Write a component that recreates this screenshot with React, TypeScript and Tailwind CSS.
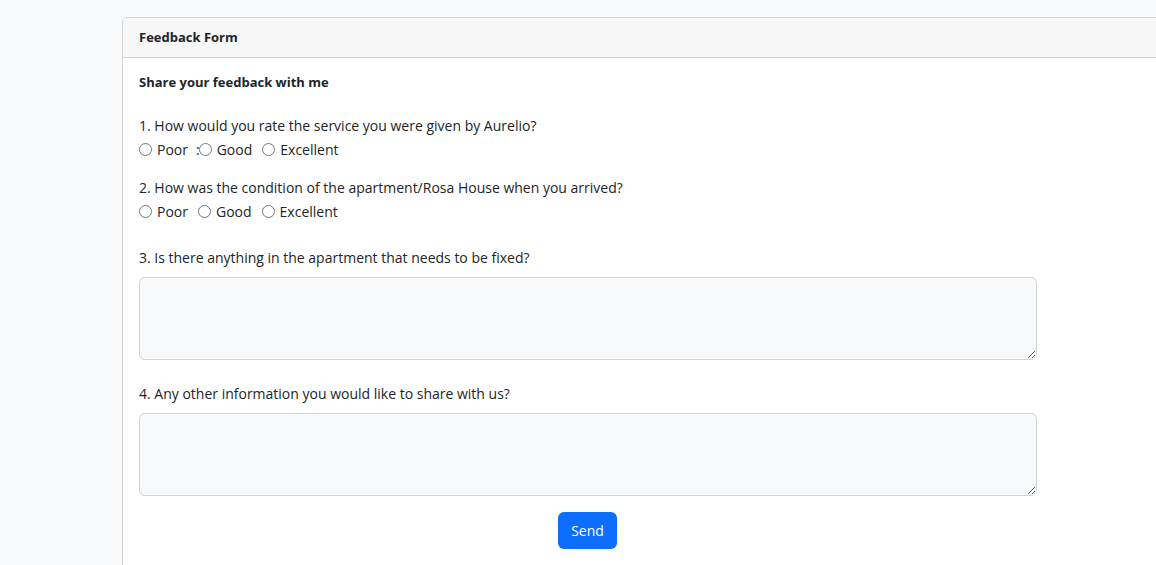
function Radio({ name, label, prefix }: { name: string; label: string; prefix?: string }) {
  return (
    <label className="inline-flex items-center mr-[10px]">
      {prefix ? <span className="relative z-10 -mr-[1px] -ml-[2px]">{prefix}</span> : null}
      <input type="radio" name={name} className="m-0 w-[13px] h-[13px] mr-[5px]" />
      <span>{label}</span>
    </label>
  );
}

export default function App() {
  return (
    <div
      className="h-[565px] w-[1156px] overflow-hidden bg-[#f8f9fa] text-[#212529] text-[14px]"
      style={{ fontFamily: '"Open Sans", "Noto Sans", sans-serif' }}
    >
      <div className="pt-[17px] pl-[122px]">
        <div className="w-[1100px] h-[700px] bg-white border border-[#d2d2d2] rounded-[6px] overflow-hidden">
          <div className="h-[40px] bg-[#f7f7f7] border-b border-[#d2d2d2] flex items-center px-[16px]">
            <span className="font-bold text-[13px]">Feedback Form</span>
          </div>
          <div className="px-[16px] pt-[14px]">
            <div className="w-[898px] flex flex-col">
              <div className="h-[21px] leading-[21px] font-bold text-[13px]">Share your feedback with me</div>

              <div className="mt-[22px] h-[22px] leading-[22px]">1. How would you rate the service you were given by Aurelio?</div>
              <div className="mt-[1px] h-[22px] flex items-center">
                <Radio name="q1" label="Poor" />
                <Radio name="q1" label="Good" prefix=":" />
                <Radio name="q1" label="Excellent" />
              </div>

              <div className="mt-[17px] h-[22px] leading-[22px]">2. How was the condition of the apartment/Rosa House when you arrived?</div>
              <div className="mt-[1px] h-[22px] flex items-center">
                <Radio name="q2" label="Poor" />
                <Radio name="q2" label="Good" />
                <Radio name="q2" label="Excellent" />
              </div>

              <div className="mt-[25px] h-[22px] leading-[22px]">3. Is there anything in the apartment that needs to be fixed?</div>
              <textarea className="mt-[8px] block w-[898px] h-[83px] bg-[#f8f9fa] border border-[#d1d5da] rounded-[6px] px-3 py-2 outline-none" />

              <div className="mt-[23px] h-[22px] leading-[22px]">4. Any other information you would like to share with us?</div>
              <textarea className="mt-[8px] block w-[898px] h-[83px] bg-[#f8f9fa] border border-[#d1d5da] rounded-[6px] px-3 py-2 outline-none" />

              <div className="mt-[16px] flex justify-center pr-[1px]">
                <button className="w-[59px] h-[37px] bg-[#0d6efd] text-white rounded-[6px] text-[14px] flex items-center justify-center">
                  Send
                </button>
              </div>
            </div>
          </div>
        </div>
      </div>
    </div>
  );
}
